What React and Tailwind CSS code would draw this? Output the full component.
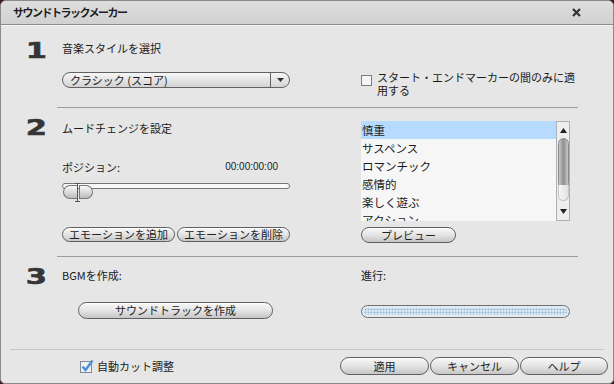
import React from "react";

const jp = { fontFamily: '"Noto Sans CJK JP", "Noto Sans", sans-serif' };

const Btn = ({ children, className = "" }) => (
  <div
    className={`flex items-center justify-center rounded-full border border-[#5f5f5f] bg-gradient-to-b from-[#f8f8f8] via-[#e4e4e4] to-[#c6c6c6] text-[11px] leading-none text-[#222] shadow-[inset_0_1px_0_#ffffff] ${className}`}
  >
    {children}
  </div>
);

const Num = ({ n }) => (
  <div
    className="origin-left scale-x-[1.45] pl-[17px] text-[21px] font-bold leading-[20px] text-[#353535] [-webkit-text-stroke:0.6px_#353535]"
    style={{ fontFamily: '"DejaVu Sans", sans-serif' }}
  >
    {n}
  </div>
);

const moods = ["慎重", "サスペンス", "ロマンチック", "感情的", "楽しく遊ぶ", "アクション"];

const App = () => (
  <div className="h-[384px] w-[614px] bg-[#3a1c1c]" style={jp}>
    <div className="flex h-full flex-col overflow-hidden rounded-t-[6px] rounded-b-[5px] border border-[#8a8a8a] bg-[#e6e6e6]">
      {/* title bar */}
      <div className="flex h-[24px] shrink-0 items-center justify-between border-b border-[#8c8c8c] bg-gradient-to-b from-[#dedede] to-[#d1d1d1] pl-[12px] pr-[32px] shadow-[0_1px_0_#f4f4f4]">
        <span className="text-[11px] font-bold tracking-[-1.5px] text-[#1e1e1e]">サウンドトラックメーカー</span>
        <svg width="9" height="9" viewBox="0 0 9 9">
          <path d="M1 1L8 8M8 1L1 8" stroke="#333" strokeWidth="2.2" />
        </svg>
      </div>

      {/* section 1 */}
      <div className="flex h-[82px] shrink-0">
        <div className="w-[61px] pt-[16px]">
          <Num n="1" />
        </div>
        <div className="w-[228px] pt-[15px]">
          <div className="text-[11px] leading-[16px] text-[#1a1a1a]">音楽スタイルを選択</div>
          <div className="mt-[16px] flex h-[16px] overflow-hidden rounded-full border border-[#626262] bg-gradient-to-b from-[#f6f6f6] to-[#d3d3d3]">
            <div className="flex flex-1 items-center pl-[7px] text-[11px] leading-none text-[#1a1a1a]">クラシック (スコア)</div>
            <div className="flex w-[19px] items-center justify-center border-l border-[#626262]">
              <svg width="7" height="4" viewBox="0 0 7 4">
                <path d="M0 0H7L3.5 4Z" fill="#333" />
              </svg>
            </div>
          </div>
        </div>
        <div className="ml-[71px] flex w-[210px] gap-[5px] pt-[46px]">
          <div className="mt-[4px] h-[11px] w-[11px] shrink-0 border border-[#7c7c7c] bg-[#f5f5f5]" />
          <div className="flex flex-col text-[11px] leading-[13px] text-[#1a1a1a] whitespace-nowrap">
            <span>スタート・エンドマーカーの間のみに適</span>
            <span>用する</span>
          </div>
        </div>
      </div>
      <div className="ml-[56px] h-px w-[521px] shrink-0 bg-[#9e9e9e]" />

      {/* section 2 */}
      <div className="flex h-[148px] shrink-0">
        <div className="w-[61px] pt-[10px]">
          <Num n="2" />
        </div>
        <div className="w-[228px] pt-[12px]">
          <div className="text-[11px] leading-[16px] text-[#1a1a1a]">ムードチェンジを設定</div>
          <div className="mt-[23px] flex justify-between pr-[12px] text-[11px] leading-[16px] text-[#1a1a1a]">
            <span>ポジション:</span>
            <span className="text-[10px]" style={{ fontFamily: '"Liberation Sans", sans-serif' }}>00:00:00:00</span>
          </div>
          <div className="relative mt-[8px] h-[18px]">
            <div className="mt-[6px] h-[6px] rounded-full border border-[#777] bg-[#fafafa]" />
            <div className="absolute left-[1px] top-[2px] flex gap-px">
              <div className="h-[14px] w-[15px] rounded-l-full rounded-r-[5px] border border-[#777] bg-gradient-to-b from-[#fafafa] to-[#bdbdbd]" />
              <div className="h-[14px] w-[14px] rounded-r-full rounded-l-[5px] border border-[#777] bg-gradient-to-b from-[#fafafa] to-[#bdbdbd]" />
            </div>
            <svg className="absolute left-[13px] top-0" width="5" height="19" viewBox="0 0 5 19">
              <path d="M0 0.5H5M2.5 0.5V18.5M0 18.5H5" stroke="#555" strokeWidth="1" />
            </svg>
          </div>
          <div className="mt-[26px] flex gap-[2px]">
            <Btn className="h-[15px] w-[113px]">エモーションを追加</Btn>
            <Btn className="h-[15px] w-[113px]">エモーションを削除</Btn>
          </div>
        </div>
        <div className="ml-[71px] w-[209px] pt-[13px]">
          <div className="flex h-[100px] bg-[#f6f6f6]">
            <div className="flex-1 overflow-hidden">
              {moods.map((m, i) => (
                <div
                  key={m}
                  className={`h-[18px] pl-[1px] text-[11.5px] leading-[18px] text-[#1a1a1a] ${i === 0 ? "bg-[#b6dbff]" : ""}`}
                >
                  {m}
                </div>
              ))}
            </div>
            <div className="flex w-[14px] flex-col items-center border border-[#a9b1b8] bg-[#eeeeee]">
              <svg className="mt-[6px]" width="7" height="5" viewBox="0 0 7 5">
                <path d="M3.5 0L7 5H0Z" fill="#222" />
              </svg>
              <div className="mt-[5px] h-[51px] w-[11px] rounded-full border border-[#8a8a8a] bg-gradient-to-r from-[#c9c9c9] via-[#8f8f8f] to-[#c9c9c9]" />
              <div className="-mt-[4px] h-[16px] w-[11px] rounded-b-full border border-t-0 border-[#c4c4c4] bg-gradient-to-r from-[#f6f6f6] to-[#e2e2e2]" />
              <div className="flex-1" />
              <svg className="mb-[6px]" width="7" height="5" viewBox="0 0 7 5">
                <path d="M0 0H7L3.5 5Z" fill="#222" />
              </svg>
            </div>
          </div>
          <Btn className="mt-[6px] h-[16px] w-[95px]">プレビュー</Btn>
        </div>
      </div>
      <div className="ml-[56px] h-px w-[521px] shrink-0 bg-[#9e9e9e]" />

      {/* section 3 */}
      <div className="flex h-[92px] shrink-0">
        <div className="w-[61px] pt-[10px]">
          <Num n="3" />
        </div>
        <div className="w-[228px] pt-[10px]">
          <div className="text-[11px] leading-[16px] text-[#1a1a1a]">BGMを作成:</div>
          <Btn className="ml-[16px] mt-[19px] h-[17px] w-[195px]">サウンドトラックを作成</Btn>
        </div>
        <div className="ml-[71px] w-[209px] pt-[10px]">
          <div className="text-[11px] leading-[16px] text-[#1a1a1a]">進行:</div>
          <div className="mt-[22px] h-[13px] rounded-full border border-[#707070] bg-[#e3ebf1] p-[2px]">
            <div className="h-full rounded-full bg-[#d6e4ef] bg-[image:radial-gradient(#8fb6d6_0.8px,transparent_1.1px)] bg-[length:3px_3px]" />
          </div>
        </div>
      </div>
      <div className="mx-[9px] h-px shrink-0 bg-[#c7c7c7]" />

      {/* footer */}
      <div className="flex flex-1 items-start justify-between pr-[5px] pt-[7px]">
        <div className="flex items-center gap-[3px] pl-[79px] pt-[1px]">
          <svg width="14" height="14" viewBox="0 0 14 14">
            <rect x="0.5" y="2.5" width="11" height="11" fill="#eef2f6" stroke="#7d8a96" />
            <path d="M2.5 7.5L5.5 11L12.5 1.5" stroke="#4a90d8" strokeWidth="2.4" fill="none" />
          </svg>
          <span className="text-[11px] leading-[16px] text-[#1a1a1a]">自動カット調整</span>
        </div>
        <div className="flex gap-[1px]">
          <Btn className="h-[18px] w-[89px]">適用</Btn>
          <Btn className="h-[18px] w-[89px]">キャンセル</Btn>
          <Btn className="h-[18px] w-[88px]">ヘルプ</Btn>
        </div>
      </div>
    </div>
  </div>
);

export default App;
